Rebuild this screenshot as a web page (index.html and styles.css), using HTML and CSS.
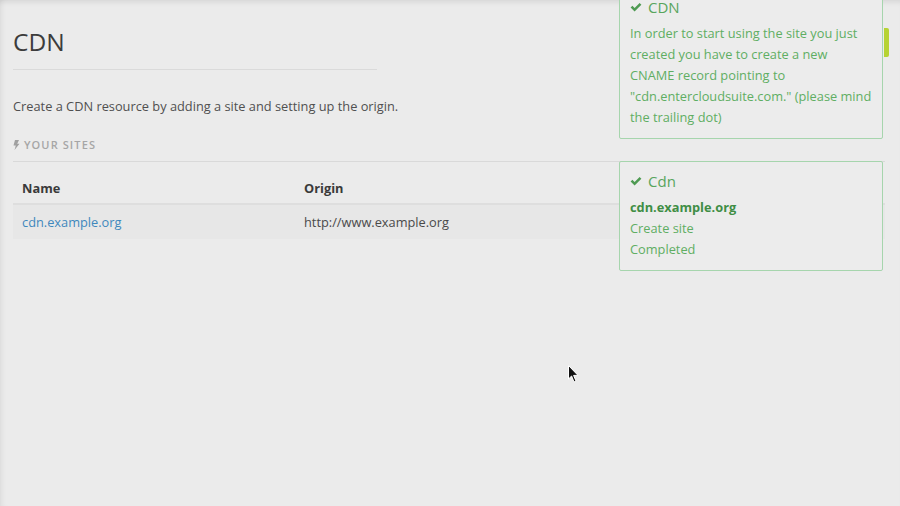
FILE: index.html
```html
<!DOCTYPE html>
<html>
<head>
<meta charset="utf-8">
<link rel="stylesheet" href="styles.css">
</head>
<body>
<div class="page">
  <h1 class="title">CDN</h1>
  <div class="title-rule"></div>
  <p class="lead">Create a CDN resource by adding a site and setting up the origin.</p>
  <div class="section-label">
    <svg class="bolt" width="7" height="10" viewBox="0 0 7 10"><path d="M2 0 L6 0 L4.2 3.8 L6.5 3.8 L1.5 10 L2.8 5.4 L0.5 5.4 Z" fill="#a0a0a0"/></svg>
    <span>YOUR SITES</span>
  </div>
  <table class="sites">
    <thead>
      <tr><th class="col-name">Name</th><th>Origin</th></tr>
    </thead>
    <tbody>
      <tr><td class="col-name"><a href="#">cdn.example.org</a></td><td>http://www.example.org</td></tr>
    </tbody>
  </table>
</div>

<div class="notices">
  <div class="notice">
    <div class="notice-title"><svg class="check" width="12" height="9" viewBox="0 0 12 9"><path d="M0.6 4.6 L2.4 2.8 L4.6 5 L9.6 0 L11.4 1.8 L4.6 8.6 Z" fill="#4e9a52"/></svg>CDN</div>
    <div class="notice-body">In order to start using the site you just created you have to create a new CNAME record pointing to "cdn.entercloudsuite.com." (please mind the trailing dot)</div>
  </div>
  <div class="notice">
    <div class="notice-title"><svg class="check" width="12" height="9" viewBox="0 0 12 9"><path d="M0.6 4.6 L2.4 2.8 L4.6 5 L9.6 0 L11.4 1.8 L4.6 8.6 Z" fill="#4e9a52"/></svg>Cdn</div>
    <div class="notice-body"><strong>cdn.example.org</strong><br>Create site<br>Completed</div>
  </div>
</div>
<div class="side-bar"></div>

<svg class="cursor" width="12" height="19" viewBox="0 0 12 19"><path d="M0.5 0.5 L0.5 14 L3.6 11 L6 17 L8 16 L5.6 10.4 L10 10.4 Z" fill="#111" stroke="#fff" stroke-width="1"/></svg>
</body>
</html>
```

FILE: styles.css
```css
html, body {
  margin: 0;
  padding: 0;
  height: 100%;
}
body {
  background: #ebebeb;
  font-family: "Open Sans", "Noto Sans", sans-serif;
  font-size: 12.8px;
  color: #444;
  overflow: hidden;
  box-shadow: inset 0 6px 6px -5px rgba(0,0,0,0.12), inset 6px 0 6px -5px rgba(0,0,0,0.08);
}
.page {
  padding: 24px 15px 0 13px;
}
.title {
  margin: 0;
  font-size: 24.5px;
  font-weight: 400;
  line-height: 36px;
  color: #3c3c3c;
}
.title-rule {
  width: 364px;
  height: 1px;
  background: #dadada;
  margin-top: 9px;
}
.lead {
  margin: 26px 0 0;
  line-height: 20px;
  color: #505050;
}
.section-label {
  margin-top: 21px;
  display: flex;
  align-items: center;
  gap: 4px;
  font-size: 11px;
  font-weight: 600;
  letter-spacing: 1.1px;
  color: #a6a6a6;
  line-height: 16px;
  padding-bottom: 8px;
  border-bottom: 1px solid #d9d9d9;
}
.bolt { display: block; }
.sites {
  width: 100%;
  border-collapse: collapse;
  margin-top: 17px;
}
.sites th {
  text-align: left;
  font-weight: 700;
  color: #3a3a3a;
  padding: 0 9px 6px;
  line-height: 18px;
  border-bottom: 2px solid #dedede;
}
.sites td {
  padding: 8px 9px;
  line-height: 18px;
  color: #4a4a4a;
  background: #e7e7e7;
}
.sites .col-name {
  width: 264px;
}
.sites a {
  color: #3f88bd;
  text-decoration: none;
}
.notices {
  position: absolute;
  top: -13px;
  right: 17px;
  width: 264px;
  display: flex;
  flex-direction: column;
  gap: 22px;
}
.notice {
  border: 1px solid #a6d5ad;
  border-radius: 2px;
  background: #ececec;
  padding: 8px 10px 10px;
  color: #5fae63;
}
.notice-title {
  font-size: 15px;
  line-height: 22px;
  margin-bottom: 5px;
  color: #58a55c;
  display: flex;
  align-items: center;
}
.check {
  display: block;
  margin-right: 6px;
}
.notice-body {
  line-height: 21px;
}
.notice-body strong {
  color: #3f8e45;
}
.side-bar {
  position: absolute;
  left: 884px;
  top: 28px;
  width: 5px;
  height: 29px;
  border-radius: 0 2px 2px 0;
  background: #b6d333;
}
.cursor {
  position: absolute;
  left: 568px;
  top: 365px;
}
```
